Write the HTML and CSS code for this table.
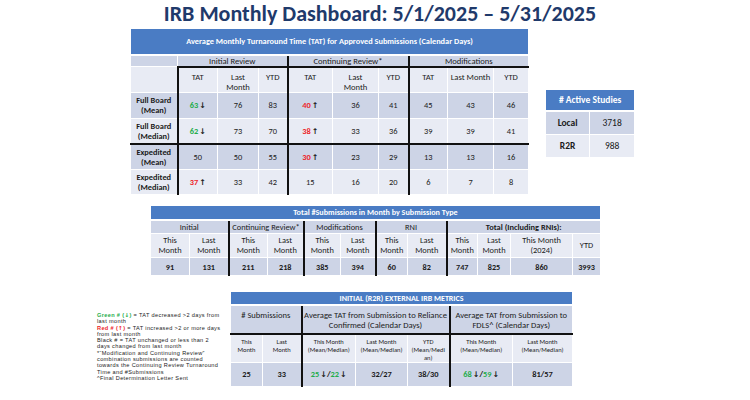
FILE: index.html
```html
<!DOCTYPE html>
<html lang="en">
<head>
<meta charset="utf-8">
<title>IRB Monthly Dashboard</title>
<link rel="stylesheet" href="styles.css">
</head>
<body>
<h1 class="title">IRB Monthly Dashboard: 5/1/2025 – 5/31/2025</h1>

<div class="top-row">
  <table class="tat">
    <colgroup>
      <col style="width:47px"><col style="width:40px"><col style="width:41px"><col style="width:29px">
      <col style="width:45px"><col style="width:46px"><col style="width:30px">
      <col style="width:39px"><col style="width:46px"><col style="width:35px">
    </colgroup>
    <tr class="hdr"><th colspan="10">Average Monthly Turnaround Time (TAT) for Approved Submissions (Calendar Days)</th></tr>
    <tr class="grp dark">
      <td></td>
      <td colspan="3">Initial Review</td>
      <td colspan="3" class="tk">Continuing Review*</td>
      <td colspan="3" class="tk">Modifications</td>
    </tr>
    <tr class="sub light">
      <td></td>
      <td class="tk tt">TAT</td><td class="tt">Last<br>Month</td><td class="tt">YTD</td>
      <td class="tk tt">TAT</td><td class="tt">Last<br>Month</td><td class="tt">YTD</td>
      <td class="tk tt">TAT</td><td class="tt">Last Month</td><td class="tt">YTD</td>
    </tr>
    <tr class="data dark">
      <td class="lbl">Full Board<br>(Mean)</td>
      <td class="tk"><span class="g">63</span><span class="ar">↓</span></td><td>76</td><td>83</td>
      <td class="tk"><span class="r">40</span><span class="ar">↑</span></td><td>36</td><td>41</td>
      <td class="tk">45</td><td>43</td><td>46</td>
    </tr>
    <tr class="data light">
      <td class="lbl">Full Board<br>(Median)</td>
      <td class="tk"><span class="g">62</span><span class="ar">↓</span></td><td>73</td><td>70</td>
      <td class="tk"><span class="r">38</span><span class="ar">↑</span></td><td>33</td><td>36</td>
      <td class="tk">39</td><td>39</td><td>41</td>
    </tr>
    <tr class="data dark sep">
      <td class="lbl">Expedited<br>(Mean)</td>
      <td class="tk">50</td><td>50</td><td>55</td>
      <td class="tk"><span class="r">30</span><span class="ar">↑</span></td><td>23</td><td>29</td>
      <td class="tk">13</td><td>13</td><td>16</td>
    </tr>
    <tr class="data light">
      <td class="lbl">Expedited<br>(Median)</td>
      <td class="tk"><span class="r">37</span><span class="ar">↑</span></td><td>33</td><td>42</td>
      <td class="tk">15</td><td>16</td><td>20</td>
      <td class="tk">6</td><td>7</td><td>8</td>
    </tr>
  </table>

  <table class="active">
    <colgroup><col style="width:44px"><col style="width:45px"></colgroup>
    <tr class="hdr"><th colspan="2"># Active Studies</th></tr>
    <tr class="dark"><td class="bold">Local</td><td>3718</td></tr>
    <tr class="light"><td class="bold">R2R</td><td>988</td></tr>
  </table>
</div>

<table class="subs">
  <colgroup>
    <col style="width:39px"><col style="width:39px">
    <col style="width:39px"><col style="width:36px">
    <col style="width:37px"><col style="width:35px">
    <col style="width:32px"><col style="width:39px">
    <col style="width:31px"><col style="width:33px"><col style="width:62px"><col style="width:28px">
  </colgroup>
  <tr class="hdr"><th colspan="12">Total #Submissions in Month by Submission Type</th></tr>
  <tr class="grp dark">
    <td colspan="2">Initial</td>
    <td colspan="2" class="tk">Continuing Review*</td>
    <td colspan="2" class="tk">Modifications</td>
    <td colspan="2" class="tk">RNI</td>
    <td colspan="4" class="tk bold">Total (Including RNIs):</td>
  </tr>
  <tr class="sub light">
    <td>This<br>Month</td><td>Last<br>Month</td>
    <td class="tk">This<br>Month</td><td>Last<br>Month</td>
    <td class="tk">This<br>Month</td><td>Last<br>Month</td>
    <td class="tk">This<br>Month</td><td>Last<br>Month</td>
    <td class="tk">This<br>Month</td><td>Last<br>Month</td><td>This Month<br>(2024)</td><td>YTD</td>
  </tr>
  <tr class="data dark">
    <td>91</td><td>131</td>
    <td class="tk">211</td><td>218</td>
    <td class="tk">385</td><td>394</td>
    <td class="tk">60</td><td>82</td>
    <td class="tk">747</td><td>825</td><td>860</td><td>3993</td>
  </tr>
</table>

<div class="bottom-row">
  <div class="legend">
    <span class="g b">Green # (<span class="ar">↓</span>)</span> = TAT decreased &gt;2 days from<br>
    last month<br>
    <span class="r b">Red # (<span class="ar">↑</span>)</span> = TAT increased &gt;2 or more days<br>
    from last month<br>
    Black # = TAT unchanged or less than 2<br>
    days changed from last month<br>
    *“Modification and Continuing Review”<br>
    combination submissions are counted<br>
    towards the Continuing Review Turnaround<br>
    Time and #Submissions<br>
    ^Final Determination Letter Sent
  </div>

  <table class="r2r">
    <colgroup>
      <col style="width:32px"><col style="width:39px">
      <col style="width:54px"><col style="width:52px"><col style="width:42px">
      <col style="width:63px"><col style="width:60px">
    </colgroup>
    <tr class="hdr"><th colspan="7">INITIAL (R2R) EXTERNAL IRB METRICS</th></tr>
    <tr class="grp dark">
      <td colspan="2"># Submissions</td>
      <td colspan="3" class="tk">Average TAT from Submission to Reliance<br>Confirmed (Calendar Days)</td>
      <td colspan="2" class="tk">Average TAT from Submission to<br>FDLS^ (Calendar Days)</td>
    </tr>
    <tr class="sub light">
      <td class="tt">This<br>Month</td><td class="tt">Last<br>Month</td>
      <td class="tk tt">This Month<br>(Mean/Median)</td><td class="tt">Last Month<br>(Mean/Median)</td><td class="tt">YTD<br>(Mean/Medi<br>an)</td>
      <td class="tk tt">This Month<br>(Mean/Median)</td><td class="tt">Last Month<br>(Mean/Median)</td>
    </tr>
    <tr class="data dark">
      <td>25</td><td>33</td>
      <td class="tk"><span class="g">25</span><span class="ar">↓</span>/<span class="g">22</span><span class="ar">↓</span></td><td>32/27</td><td>38/30</td>
      <td class="tk"><span class="g">68</span><span class="ar">↓</span>/<span class="g">59</span><span class="ar">↓</span></td><td>81/57</td>
    </tr>
  </table>
</div>
</body>
</html>
```

FILE: styles.css
```css
* { box-sizing: border-box; }

body {
  margin: 0;
  width: 750px;
  height: 400px;
  overflow: hidden;
  background: #ffffff;
  font-family: Carlito, Lato, "Liberation Sans", sans-serif;
  color: #1b1b1b;
}

.title {
  margin: 0;
  height: 28px;
  padding-left: 10px;
  font-size: 22px;
  line-height: 28px;
  font-weight: 700;
  color: #1f3a6b;
  text-align: center;
}

table {
  border-collapse: collapse;
  table-layout: fixed;
}

td, th {
  padding: 0;
  text-align: center;
  vertical-align: middle;
  border: 1px solid #ffffff;
  font-weight: 400;
  white-space: nowrap;
}

.hdr th {
  background: #4a7cc4;
  color: #ffffff;
  font-weight: 700;
  border-bottom: 2px solid #ffffff;
}

.dark td { background: #cdd4e6; }
.light td { background: #e8ebf4; }

.tk { border-left: 2px solid #111111; }
.tt { border-top: 2px solid #111111; }
.sep td { border-top: 2px solid #111111; }

.bold, .lbl, .b { font-weight: 700; }

.g { color: #25ad4c; font-weight: 700; }
.r { color: #ee2328; font-weight: 700; }
.ar {
  font-family: "DejaVu Sans", sans-serif;
  font-weight: 700;
  font-size: 0.95em;
  margin-left: 1px;
}

/* top table */
.top-row {
  display: flex;
  align-items: flex-start;
  padding-left: 130px;
}

.tat {
  width: 398px;
  font-size: 8.6px;
}
.tat .hdr th { height: 26px; font-size: 8.3px; }
.tat .grp td { height: 12px; line-height: 10px; }
.tat .sub td {
  height: 26px;
  vertical-align: top;
  padding-top: 4px;
  line-height: 10px;
}
.tat .data td { height: 25.5px; font-size: 8.4px; }
.tat .lbl { line-height: 10px; font-size: 8.2px; }

.active {
  width: 89px;
  margin-left: 16px;
  margin-top: 61px;
  font-size: 9.5px;
}
.active .hdr th { height: 21px; }
.active td { height: 23.5px; }

/* middle table */
.subs {
  width: 450px;
  margin: 10px 0 0 150px;
  font-size: 8.4px;
}
.subs .hdr th { height: 14px; font-size: 8.1px; }
.subs .grp td { height: 14px; line-height: 10px; }
.subs .sub td { height: 24px; line-height: 9.5px; }
.subs .data td { height: 18px; font-weight: 700; font-size: 8.2px; }

/* bottom */
.bottom-row {
  display: flex;
  align-items: flex-start;
  margin-top: 15px;
}

.legend {
  width: 116px;
  margin-left: 97px;
  margin-top: 21px;
  font-family: "Liberation Sans", Arial, sans-serif;
  font-size: 5.6px;
  letter-spacing: 0.35px;
  line-height: 6.3px;
  white-space: nowrap;
  color: #1b1b1b;
}
.legend .ar { margin-left: 0; font-size: 1em; }

.r2r {
  width: 342px;
  margin-left: 17px;
  font-size: 8.6px;
}
.r2r .hdr th { height: 13px; font-size: 8px; }
.r2r .grp td {
  height: 29px;
  vertical-align: top;
  padding-top: 4px;
  line-height: 10px;
}
.r2r .sub td {
  height: 28px;
  vertical-align: top;
  padding-top: 3px;
  font-size: 6.5px;
  line-height: 8px;
}
.r2r .data td { height: 24px; font-weight: 700; font-size: 8.4px; }
```
